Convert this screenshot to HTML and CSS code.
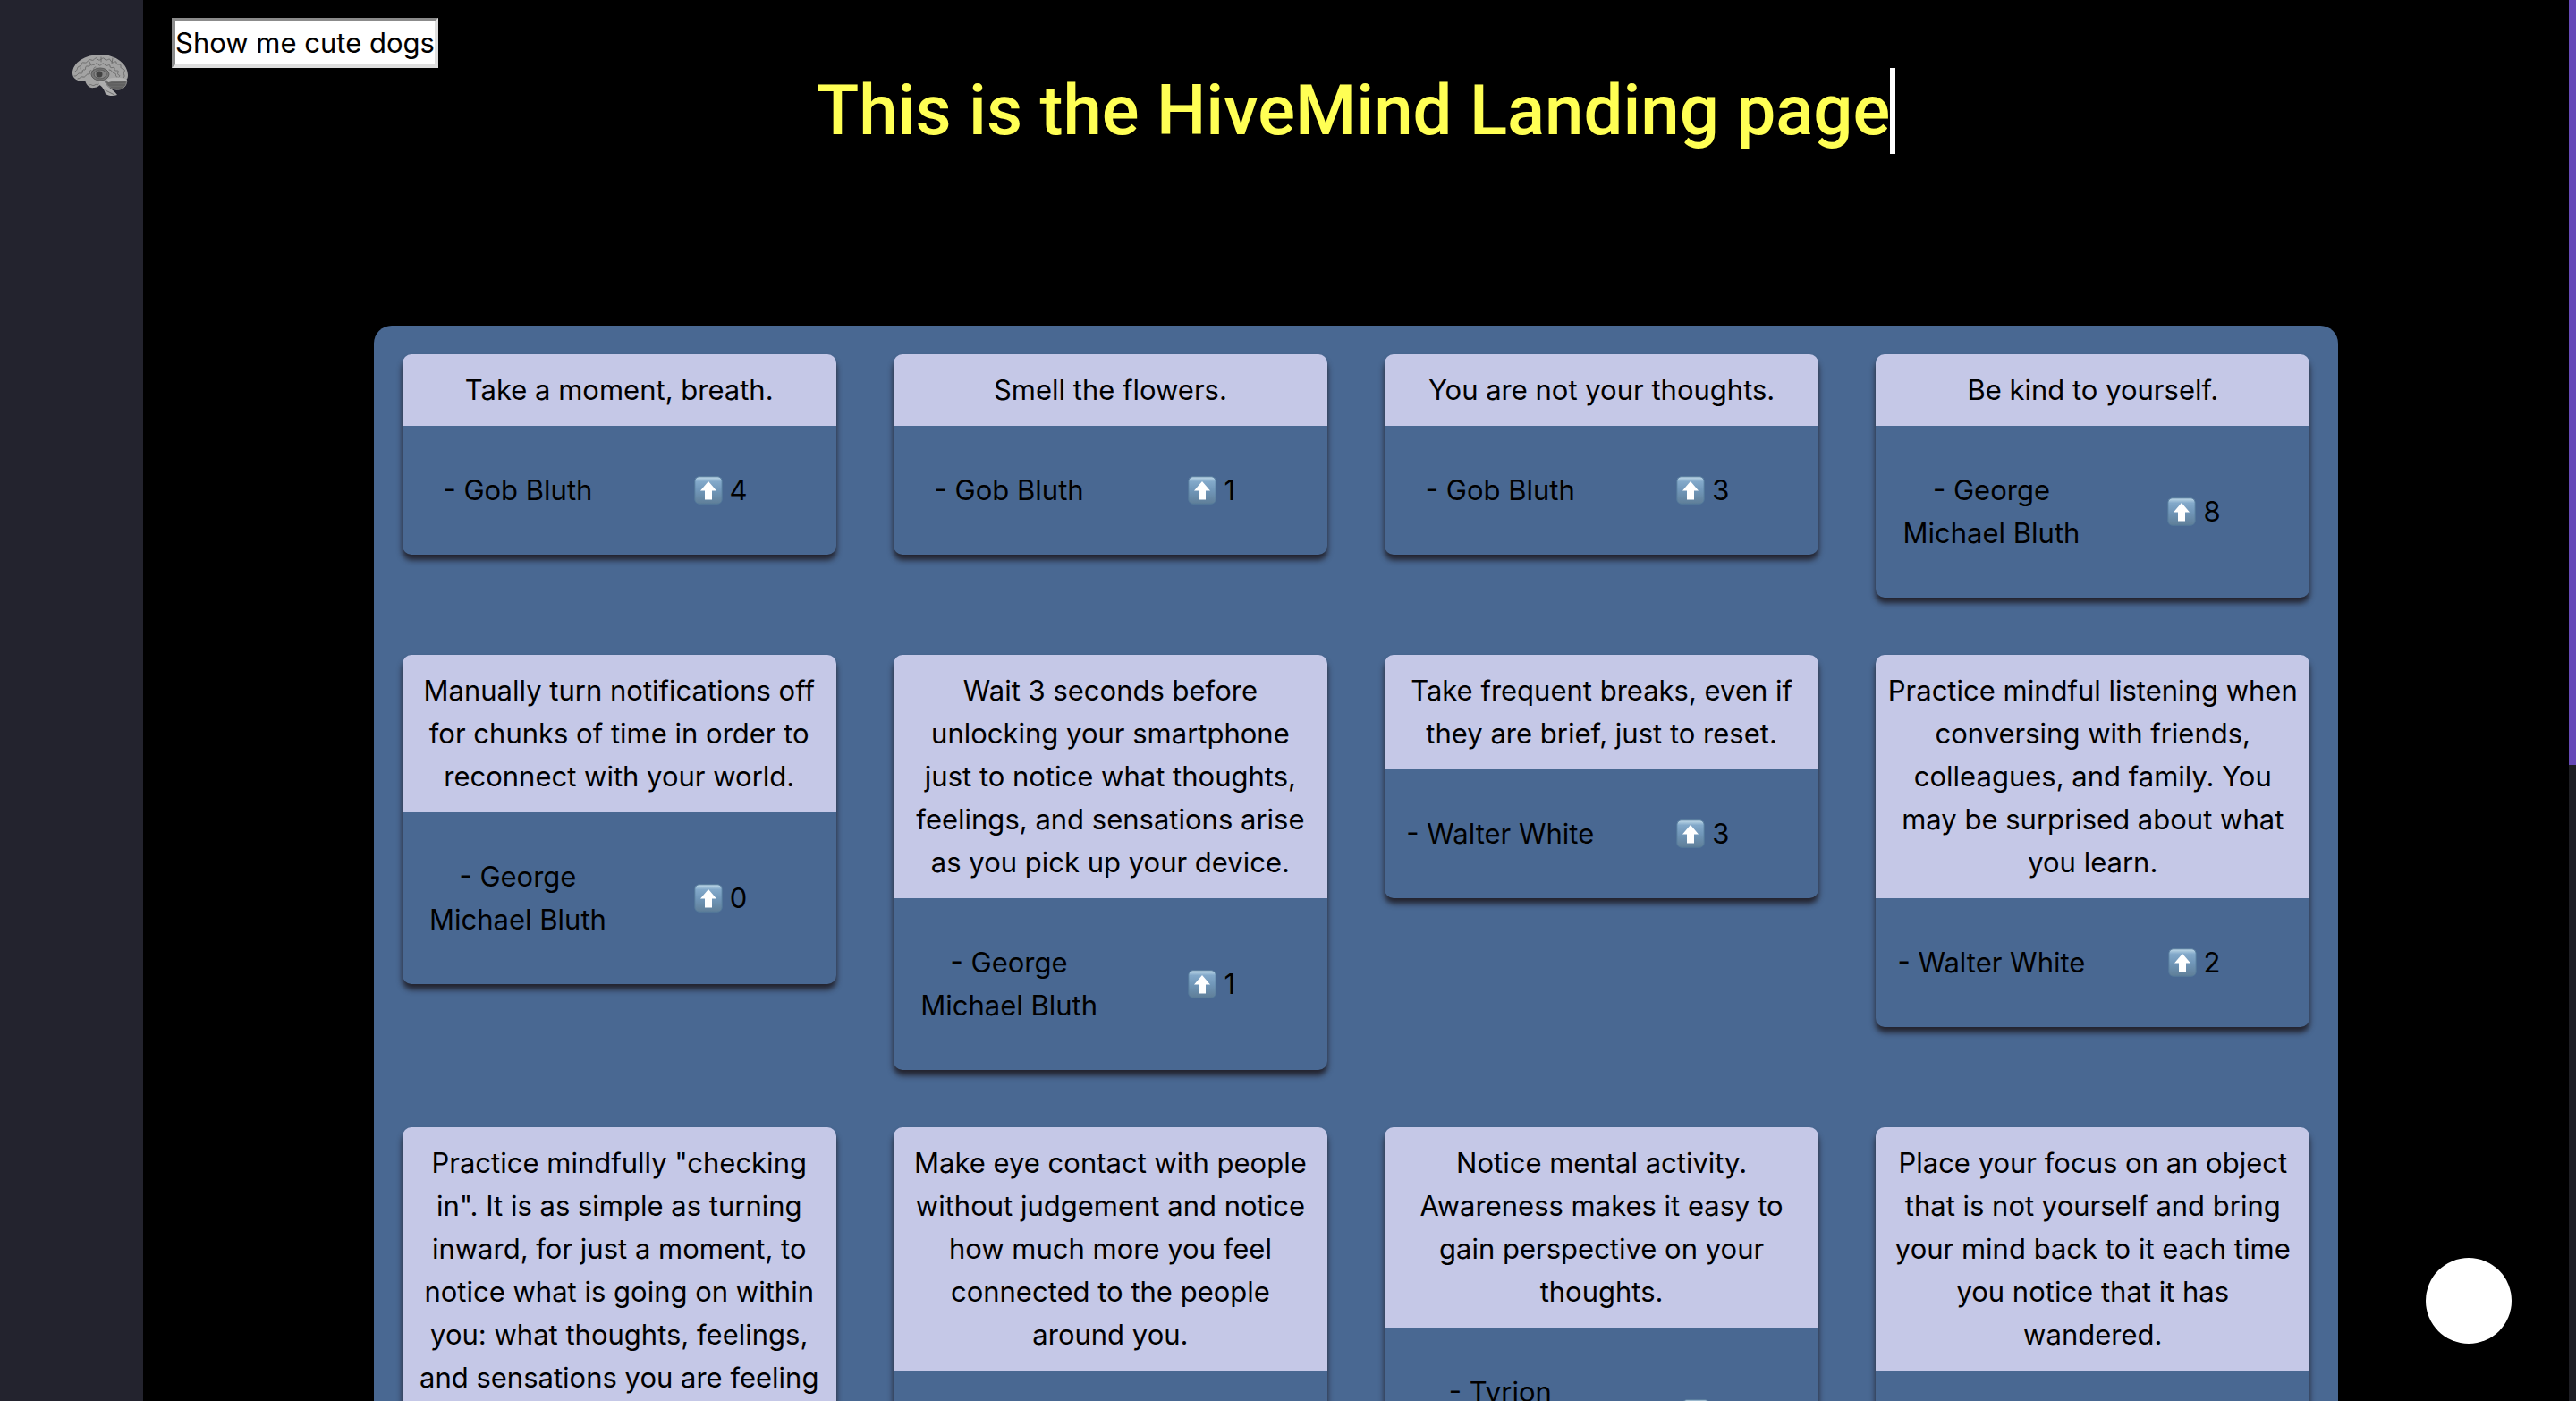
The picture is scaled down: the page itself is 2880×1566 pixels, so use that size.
FILE: index.html
```html
<!DOCTYPE html>
<html lang="en">
<head>
<meta charset="utf-8">
<title>HiveMind</title>
<link rel="stylesheet" href="styles.css">
</head>
<body>
<svg class="defs" width="0" height="0" aria-hidden="true">
  <defs>
    <linearGradient id="key" x1="0" y1="0" x2="0" y2="1">
      <stop offset="0" stop-color="#c3dcea"/>
      <stop offset="0.18" stop-color="#83a9ca"/>
      <stop offset="0.5" stop-color="#7197b9"/>
      <stop offset="1" stop-color="#5f7e98"/>
    </linearGradient>
    <symbol id="up" viewBox="0 0 32 32">
      <rect x="0.8" y="0.8" width="30.4" height="30.4" rx="5" fill="url(#key)" stroke="#557a9b" stroke-width="1"/>
      <path d="M16 6L25 16.5H20V26.5H12V16.5H7Z" fill="#fff"/>
    </symbol>
  </defs>
</svg>
<nav class="sidebar">
  <a class="logo" href="#" aria-label="HiveMind home">
    <svg viewBox="0 0 64 48">
      <path d="M38 31C46 27 57 27 62 30C61 38 56 41 49 40C44 39 39 36 38 31Z" fill="#696969" stroke="#8a8a8a"/>
      <path d="M40 33L60 32M41 35L60 35M44 38L57 38" stroke="#555" stroke-width=".7"/>
      <path d="M15 29C16 35 20 39 25 38C30 38 32 35 34 31L28 26Z" fill="#a3a3a3"/>
      <path d="M31 31L37 30C38 37 46 39 51 46C46 48 41 47 38 45C37 41 34 36 31 35Z" fill="#adadad"/>
      <path d="M1 22C1 10 15 1 32 1C50 1 63 12 63 24C63 31 58 31 53 29C46 27 40 30 34 31C27 31 20 30 14 31C7 31 1 28 1 22Z" fill="#a3a3a3"/>
      <g fill="none" stroke="#686868" stroke-width=".9" stroke-linecap="round">
        <path d="M4 20C8 18 5 15 9 14S9 9 14 10S18 5 22 7S26 2 29 6S35 2 37 6S42 3 44 8S50 6 50 10S56 10 55 14S61 16 59 20S61 24 58 27"/>
        <path d="M3 25C7 26 6 21 10 22S11 17 14 18S14 13 18 14S20 10 23 12S28 8 30 12S35 8 37 12S43 10 43 14S49 13 48 17S54 17 52 21S56 23 53 26"/>
        <path d="M7 28C10 28 10 25 13 26S16 22 19 23S19 17 22 19S24 14 27 15M42 18C46 18 45 22 48 22S48 26 51 26M46 5L45 11M33 4L33 9M20 9L22 13M10 16L11 20"/>
        <path d="M20 35C22 33 23 37 26 35S28 37 30 34M38 41L48 46"/>
      </g>
      <ellipse cx="32" cy="23" rx="10" ry="7" fill="#777" stroke="#5b5b5b"/>
      <ellipse cx="32" cy="23" rx="7" ry="5" fill="#858585" stroke="#585858"/>
      <circle cx="31" cy="23" r="3.5" fill="#424242"/>
      <path d="M39 29C46 26 55 26 62 29L61 31C54 29 47 30 41 32Z" fill="#b3b3b3"/>
    </svg>
  </a>
</nav>
<main class="page">
  <button class="dogs" type="button">Show me cute dogs</button>
  <h1 class="title"><span class="typed">This is the HiveMind Landing page</span></h1>
  <section class="board">
    <article class="card"><p class="quote">Take a moment, breath.</p><footer class="meta"><span>- Gob Bluth</span><button class="vote" type="button" aria-label="Upvote, 4"><svg><use href="#up"/></svg>4</button></footer></article>
    <article class="card"><p class="quote">Smell the flowers.</p><footer class="meta"><span>- Gob Bluth</span><button class="vote" type="button" aria-label="Upvote, 1"><svg><use href="#up"/></svg>1</button></footer></article>
    <article class="card"><p class="quote">You are not your thoughts.</p><footer class="meta"><span>- Gob Bluth</span><button class="vote" type="button" aria-label="Upvote, 3"><svg><use href="#up"/></svg>3</button></footer></article>
    <article class="card"><p class="quote">Be kind to yourself.</p><footer class="meta"><span>- George Michael Bluth</span><button class="vote" type="button" aria-label="Upvote, 8"><svg><use href="#up"/></svg>8</button></footer></article>
    <article class="card"><p class="quote">Manually turn notifications off for chunks of time in order to reconnect with your world.</p><footer class="meta"><span>- George Michael Bluth</span><button class="vote" type="button" aria-label="Upvote, 0"><svg><use href="#up"/></svg>0</button></footer></article>
    <article class="card"><p class="quote">Wait 3 seconds before unlocking your smartphone just to notice what thoughts, feelings, and sensations arise as you pick up your device.</p><footer class="meta"><span>- George Michael Bluth</span><button class="vote" type="button" aria-label="Upvote, 1"><svg><use href="#up"/></svg>1</button></footer></article>
    <article class="card"><p class="quote">Take frequent breaks, even if they are brief, just to reset.</p><footer class="meta"><span>- Walter White</span><button class="vote" type="button" aria-label="Upvote, 3"><svg><use href="#up"/></svg>3</button></footer></article>
    <article class="card"><p class="quote">Practice mindful listening when conversing with friends, colleagues, and family. You may be surprised about what you learn.</p><footer class="meta"><span>- Walter White</span><button class="vote" type="button" aria-label="Upvote, 2"><svg><use href="#up"/></svg>2</button></footer></article>
    <article class="card"><p class="quote">Practice mindfully "checking in". It is as simple as turning inward, for just a moment, to notice what is going on within you: what thoughts, feelings, and sensations you are feeling</p></article>
    <article class="card"><p class="quote">Make eye contact with people without judgement and notice how much more you feel connected to the people around you.</p><footer class="meta"></footer></article>
    <article class="card"><p class="quote">Notice mental activity. Awareness makes it easy to gain perspective on your thoughts.</p><footer class="meta"><span>- Tyrion Lannister</span><button class="vote" type="button" aria-label="Upvote"><svg><use href="#up"/></svg>&nbsp;</button></footer></article>
    <article class="card"><p class="quote">Place your focus on an object that is not yourself and bring your mind back to it each time you notice that it has wandered.</p><footer class="meta"></footer></article>
  </section>
</main>
<button class="fab" type="button" aria-label="Add"></button>
<div class="scrollbar"><div class="thumb"></div></div>
</body>
</html>
```
FILE: styles.css
```css
* { box-sizing: border-box; }

body {
  margin: 0;
  height: 100vh;
  overflow: hidden;
  display: flex;
  background: #000;
  color: #000;
  font: 400 31px/48px Inter, "Liberation Sans", sans-serif;
}

button { font: inherit; color: inherit; }

.defs { position: absolute; }

.sidebar {
  flex: 0 0 160px;
  padding: 60px 16px 0 80px;
  background: #23232e;
}

.logo { display: block; }
.logo svg { display: block; width: 64px; height: 48px; }

.page {
  flex: 1;
  min-width: 0;
  padding-top: 20px;
}

.dogs {
  display: block;
  margin-left: 32px;
  padding: 0;
  background: #fff;
  border: 4px solid;
  border-color: #8b8b8b #dedede #dedede #8b8b8b;
}

.title {
  margin: 0 0 192px;
  text-align: center;
  color: #ffff54;
  font-family: Roboto, Inter, sans-serif;
  font-size: 78px;
  line-height: 96px;
  font-weight: 500;
}

.typed {
  display: inline-block;
  border-right: 6px solid #fff;
}

.board {
  width: 81%;
  margin: 0 auto;
  padding: 32px;
  display: grid;
  grid-template-columns: repeat(4, minmax(0, 1fr));
  align-items: start;
  gap: 64px;
  background: #496892;
  border-radius: 20px;
}

.card {
  overflow: hidden;
  border-radius: 10px;
  box-shadow: 0 6px 6px #23232e;
  background: #496892;
  text-align: center;
}

.quote {
  margin: 0;
  padding: 16px 12px;
  background: #c5c8e7;
}

.meta {
  display: grid;
  grid-template-columns: repeat(2, minmax(0, 1fr));
  align-items: center;
  min-height: 144px;
  padding: 48px 16px;
}

.vote {
  display: flex;
  align-items: center;
  justify-content: center;
  gap: 8px;
  padding: 0;
  border: 0;
  background: none;
}

.vote svg { width: 32px; height: 32px; }

.fab {
  position: fixed;
  right: 72px;
  bottom: 64px;
  width: 96px;
  height: 96px;
  padding: 0;
  border: 0;
  border-radius: 50%;
  background: #fff;
}

.scrollbar {
  flex: 0 0 8px;
  background: #1e1e24;
}

.thumb {
  height: 855px;
  background: #6649b8;
}
```
